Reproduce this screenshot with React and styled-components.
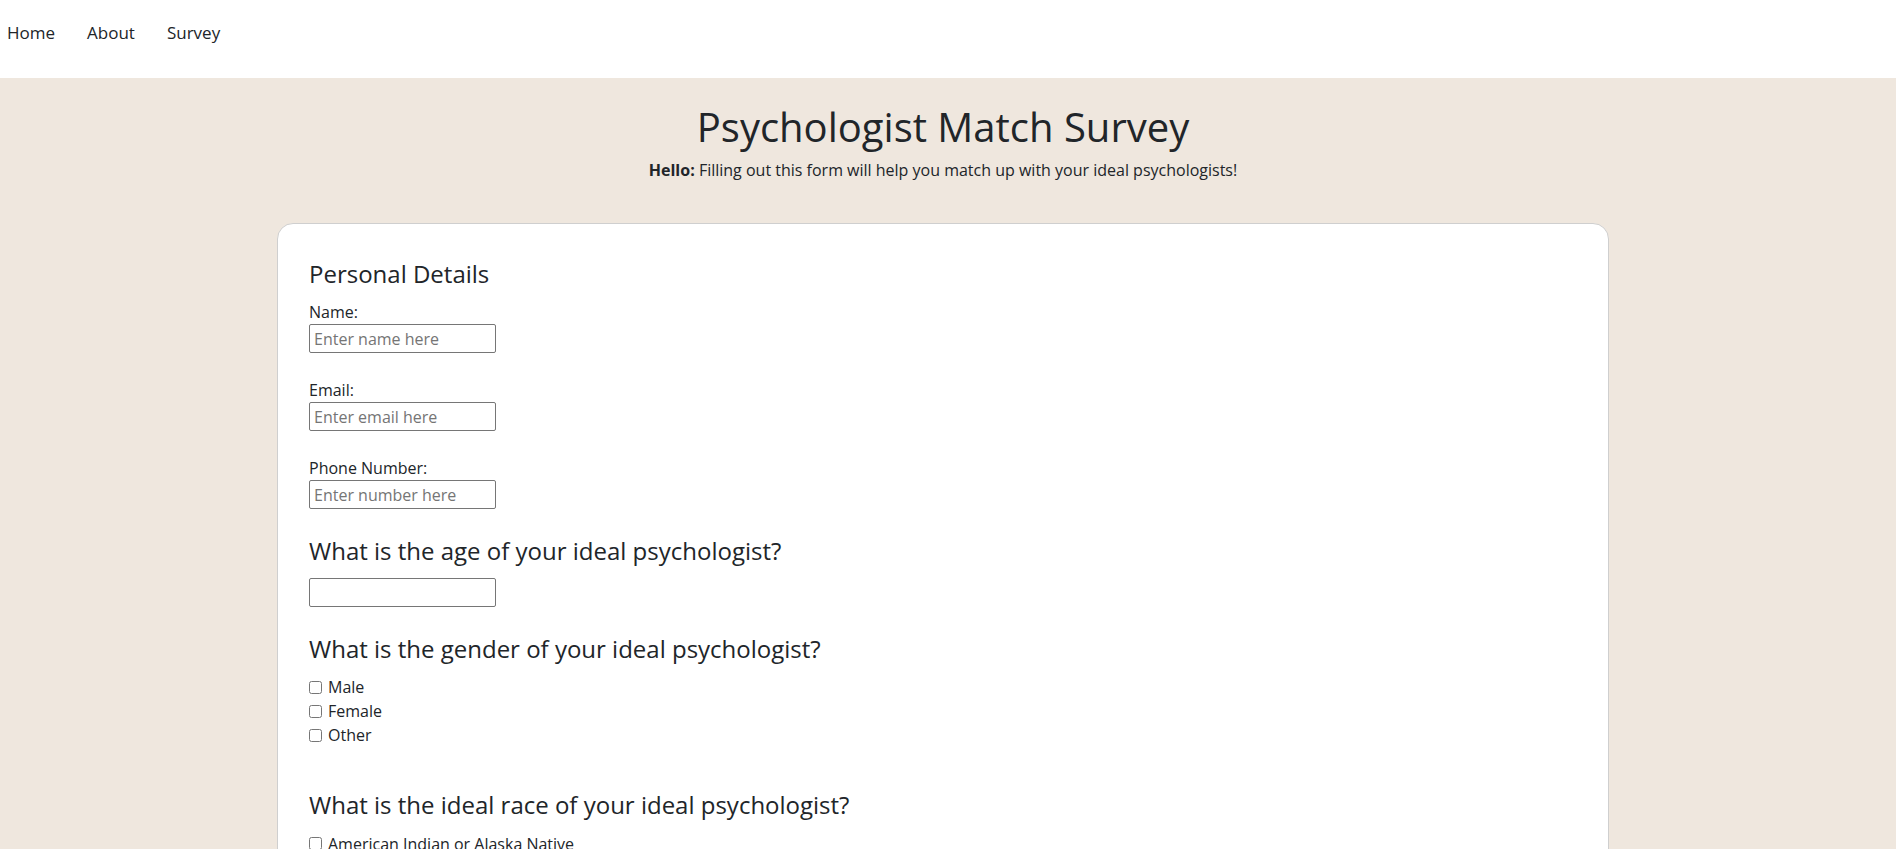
import React from "react";
import styled, { createGlobalStyle } from "styled-components";

const GlobalStyle = createGlobalStyle`
  html {
    scrollbar-width: none;
  }
  body {
    margin: 0;
    font-family: "Open Sans", "Noto Sans", sans-serif;
    font-size: 16px;
    line-height: 1.5;
    color: #212529;
    background: #efe7de;
  }
  * {
    box-sizing: border-box;
  }
`;

const races = [
  "American Indian or Alaska Native",
  "Asian",
  "Black or African American",
  "Hispanic or Latino",
  "Native Hawaiian or Other Pacific Islander",
  "White",
];

const App = () => {
  return (
    <>
      <GlobalStyle />
      <Nav>
        <NavLink href="#">Home</NavLink>
        <NavLink href="#">About</NavLink>
        <NavLink href="#">Survey</NavLink>
      </Nav>
      <Main>
        <Title>Psychologist Match Survey</Title>
        <Intro>
          <strong>Hello:</strong> Filling out this form will help you match up
          with your ideal psychologists!
        </Intro>
        <Card>
          <Section>
            <Heading>Personal Details</Heading>
            <Field>
              <Label>Name:</Label>
              <Input type="text" placeholder="Enter name here" />
            </Field>
            <Field>
              <Label>Email:</Label>
              <Input type="email" placeholder="Enter email here" />
            </Field>
            <Field last>
              <Label>Phone Number:</Label>
              <Input type="tel" placeholder="Enter number here" />
            </Field>
          </Section>

          <Section>
            <Heading>What is the age of your ideal psychologist?</Heading>
            <Input type="text" />
          </Section>

          <Section wide>
            <Heading>What is the gender of your ideal psychologist?</Heading>
            {["Male", "Female", "Other"].map((g) => (
              <Option key={g}>
                <Check type="checkbox" />
                {g}
              </Option>
            ))}
          </Section>

          <Section>
            <Heading>What is the ideal race of your ideal psychologist?</Heading>
            {races.map((r) => (
              <Option key={r}>
                <Check type="checkbox" />
                {r}
              </Option>
            ))}
          </Section>
        </Card>
      </Main>
    </>
  );
};

const Nav = styled.nav`
  height: 78px;
  background: #fff;
  display: flex;
  align-items: flex-start;
  gap: 32px;
  padding: 20px 0 0 7px;
`;

const NavLink = styled.a`
  color: #212529;
  text-decoration: none;
  font-size: 17px;
`;

const Main = styled.main`
  padding: 24.5px 10px 40px 0;
  display: flex;
  flex-direction: column;
  align-items: center;
`;

const Title = styled.h1`
  margin: 0;
  font-size: 40px;
  font-weight: 400;
  line-height: 1.2;
`;

const Intro = styled.p`
  margin: 7px 0 41px;
  font-size: 16px;

  strong {
    font-weight: 700;
  }
`;

const Card = styled.div`
  width: 1332px;
  background: #fff;
  border: 1px solid #cfcfcf;
  border-radius: 16px;
  padding: 36px 31px 32px;
`;

const Section = styled.div`
  margin-bottom: ${(p) => (p.wide ? "44px" : "28px")};
`;

const Heading = styled.h4`
  margin: 0 0 11.5px;
  font-size: 24px;
  font-weight: 500;
  line-height: 1.2;
`;

const Field = styled.div`
  margin-bottom: ${(p) => (p.last ? "0" : "24.5px")};
`;

const Label = styled.label`
  display: block;
  font-size: 16px;
`;

const Input = styled.input`
  display: block;
  width: 187px;
  height: 29.5px;
  padding: 1px 4px;
  border: 1px solid #767676;
  border-radius: 2px;
  font-family: "Open Sans", sans-serif;
  font-size: 16px;
  color: #212529;

  &::placeholder {
    color: #757575;
  }
`;

const Option = styled.label`
  display: flex;
  align-items: center;
  height: 24px;
  font-size: 16px;
`;

const Check = styled.input`
  width: 13px;
  height: 13px;
  margin: 0 6px 0 0;
`;

export default App;
